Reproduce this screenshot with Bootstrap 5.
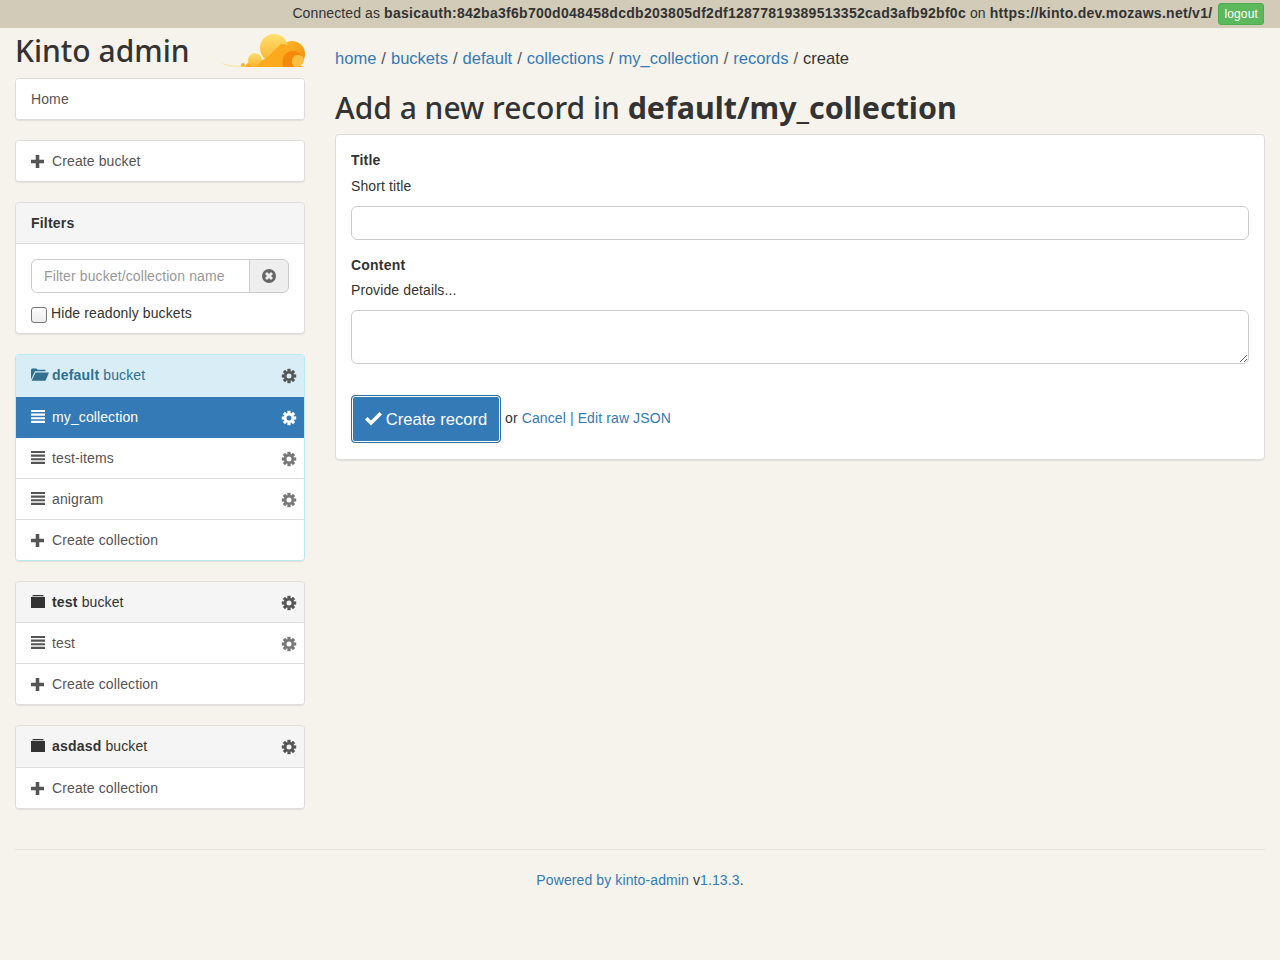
<!DOCTYPE html>
<html lang="en">

<head>
  <meta charset="UTF-8">
  <meta name="viewport" content="width=device-width, initial-scale=1.0">
  <title>Kinto admin</title>
  <link href="https://cdn.jsdelivr.net/npm/bootstrap@5.3.3/dist/css/bootstrap.min.css" rel="stylesheet">
  <style>
    body {
      --bs-border-radius: 4px;
      background: #f6f3ec;
      color: #333;
      font-family: "Liberation Sans", Arial, sans-serif;
      font-size: 14px;
      line-height: 20px;
      letter-spacing: .11px;
    }
    b {
      letter-spacing: .2px;
    }
    a {
      color: #337ab7;
      text-decoration: none;
    }
    .session-bar {
      height: 28px;
      background: #d2cbb7;
      padding: 3px 16px 0 0;
      gap: 6px;
    }
    .session-bar b {
      letter-spacing: .28px;
    }
    .session-bar .btn {
      --bs-btn-padding-y: 1px;
      --bs-btn-padding-x: 5px;
      --bs-btn-font-size: 12px;
      --bs-btn-line-height: 18px;
      --bs-btn-bg: #5cb85c;
      --bs-btn-border-color: #4cae4c;
      --bs-btn-border-radius: 3px;
      letter-spacing: .15px;
    }
    .page-cols {
      --bs-gutter-x: 30px;
    }
    .page-wrap {
      padding: 0 15px;
    }
    .brand-row {
      height: 50px;
      position: relative;
    }
    .brand-title {
      font-family: "Noto Sans", "Open Sans", sans-serif;
      font-weight: 500;
      font-size: 30px;
      line-height: 45px;
      letter-spacing: 0;
      margin: 0;
    }
    .brand-logo {
      position: absolute;
      right: 0;
      top: 6px;
    }
    .side-panel {
      --bs-card-border-color: #ddd;
      --bs-card-border-radius: 4px;
      --bs-card-inner-border-radius: 3px;
      --bs-card-cap-bg: #f5f5f5;
      --bs-card-cap-padding-y: 10px;
      --bs-card-cap-padding-x: 15px;
      margin-bottom: 20px;
      box-shadow: 0 1px 1px rgba(0, 0, 0, .08);
    }
    .side-panel .card-header {
      height: 41px;
      display: flex;
      align-items: center;
      border-bottom-color: #ddd;
    }
    .side-panel .card-header.tall-head {
      height: 42px;
      padding-bottom: 11px;
    }
    .side-panel .list-group {
      --bs-list-group-color: #555;
      --bs-list-group-item-padding-x: 15px;
      --bs-list-group-item-padding-y: 10px;
      --bs-list-group-border-color: #ddd;
      --bs-list-group-action-color: #555;
      --bs-list-group-active-bg: #337ab7;
      --bs-list-group-active-border-color: #337ab7;
    }
    .side-link {
      display: flex;
      align-items: center;
    }
    .lead-icon {
      margin-right: 7px;
      flex: none;
    }
    .lead-plus {
      margin-right: 8px;
    }
    .lead-open {
      margin-right: 3px;
    }
    .settings-icon {
      margin-left: auto;
      margin-right: -8px;
      margin-top: 2px;
      color: #777;
    }
    .card-header .settings-icon {
      color: #555;
    }
    .list-group-item.active .settings-icon {
      color: #fff;
    }
    .panel-info {
      --bs-card-border-color: #bce8f1;
    }
    .side-panel.panel-info .card-header {
      background: #d9edf7;
      color: #31708f;
      border-bottom: 0;
      height: 42px;
      padding-bottom: 12px;
    }
    .filter-body {
      padding: 15px 15px 9px;
      height: 89px;
    }
    .filter-group .form-control {
      height: 34px;
      font-size: 14px;
      padding: 6px 12px;
      border-color: #ccc;
      color: #555;
      letter-spacing: .11px;
    }
    .filter-group .form-control::placeholder {
      color: #999;
    }
    .filter-group .input-group-text {
      background: #eee;
      border-color: #ccc;
      padding: 0;
      width: 40px;
      justify-content: center;
      color: #666;
    }
    .readonly-row {
      display: flex;
      margin-top: 10px;
      gap: 4px;
    }
    .readonly-box {
      appearance: none;
      width: 16px;
      height: 16px;
      margin: 4px 0 0;
      border: 1px solid #767676;
      border-radius: 3px;
      background: linear-gradient(#fdfdfd, #ececec);
      flex: none;
    }
    .crumbs {
      --bs-breadcrumb-divider-color: #555;
      --bs-breadcrumb-item-active-color: #333;
      --bs-breadcrumb-item-padding-x: 5px;
      --bs-breadcrumb-margin-bottom: 0;
      font-size: 16.55px;
      line-height: 23px;
      letter-spacing: 0;
      padding-top: 19px;
    }
    .page-heading {
      font-family: "Noto Sans", "Open Sans", sans-serif;
      font-weight: 500;
      font-size: 30px;
      line-height: 36px;
      letter-spacing: 0;
      margin: 20px 0 8px;
      color: #333;
    }
    .page-heading b {
      font-weight: 700;
      font-size: 30.4px;
      letter-spacing: 0;
    }
    .form-panel {
      --bs-card-border-color: #ddd;
      --bs-card-border-radius: 4px;
      padding: 15px;
      height: 326px;
      box-shadow: 0 1px 1px rgba(0, 0, 0, .08);
    }
    .field-label {
      font-weight: 700;
      letter-spacing: .2px;
      display: block;
      margin: 0 0 6px;
    }
    .field-help {
      margin: 0 0 10px;
    }
    .form-panel .form-control {
      border-color: #ccc;
    }
    .title-input {
      height: 34px;
      margin-bottom: 15px;
    }
    .content-label {
      margin-bottom: 5px;
    }
    .content-input {
      height: 54px;
      margin-bottom: 31px;
    }
    .submit-btn {
      --bs-btn-bg: #337ab7;
      --bs-btn-border-color: #2e6da4;
      --bs-btn-hover-bg: #337ab7;
      --bs-btn-font-size: 16.6px;
      --bs-btn-border-radius: 4px;
      height: 48px;
      width: 150px;
      padding: 0;
      letter-spacing: 0;
      box-shadow: inset 0 0 0 1px #fff;
      display: inline-flex;
      align-items: center;
      justify-content: center;
      gap: 4px;
    }
    .submit-label {
      padding-top: 2px;
    }
    .form-links {
      margin-bottom: 2px;
    }
    .page-rule {
      border-color: #e6e3dc;
      opacity: 1;
      margin: 20px 0 20px;
    }
    .page-foot {
      text-align: center;
      padding-bottom: 70px;
    }
  </style>
</head>

<body>
  <svg width="0" height="0" class="d-block position-absolute">
    <symbol id="i-plus" viewBox="0 0 13 13">
      <path d="M4.700 0h3.600v4.700H13v3.600H8.300V13H4.700V8.300H0V4.700h4.700z" fill="currentColor" />
    </symbol>
    <symbol id="i-lines" viewBox="0 0 14 14">
      <path d="M0 0h14v2.100H0zM0 3.600h14v2.100H0zM0 7.200h14v2.100H0zM0 10.800h14V13H0z" fill="currentColor" />
    </symbol>
    <symbol id="i-gear" viewBox="0 0 16 16">
      <g fill="currentColor">
        <rect x="6.400" y=".8" width="3.200" height="3" />
        <rect x="6.400" y=".8" width="3.200" height="3" transform="rotate(45 8 8)" />
        <rect x="6.400" y=".8" width="3.200" height="3" transform="rotate(90 8 8)" />
        <rect x="6.400" y=".8" width="3.200" height="3" transform="rotate(135 8 8)" />
        <rect x="6.400" y=".8" width="3.200" height="3" transform="rotate(180 8 8)" />
        <rect x="6.400" y=".8" width="3.200" height="3" transform="rotate(225 8 8)" />
        <rect x="6.400" y=".8" width="3.200" height="3" transform="rotate(270 8 8)" />
        <rect x="6.400" y=".8" width="3.200" height="3" transform="rotate(315 8 8)" />
      </g>
      <circle cx="8" cy="8" r="3.800" fill="none" stroke="currentColor" stroke-width="2.600" />
    </symbol>
    <symbol id="i-folder" viewBox="0 0 14 14">
      <path d="M2 0h10l1 1.200H1zM0 2h14v11H0z" fill="currentColor" />
    </symbol>
    <symbol id="i-folder-open" viewBox="0 0 18 14">
      <path d="M0 11.500V1.500L1 .5h4.500l1 1.200H14.500v1.600H4L0 11.500zM4.600 4.400H18L14.500 12.800H.6z" fill="currentColor" />
    </symbol>
    <symbol id="i-clear" viewBox="0 0 14 14">
      <path fill-rule="evenodd" d="M7 0a7 7 0 1 1 0 14A7 7 0 0 1 7 0zM5 3 3 5l2 2-2 2 2 2 2-2 2 2 2-2-2-2 2-2-2-2-2 2z" fill="currentColor" />
    </symbol>
    <symbol id="i-check" viewBox="0 0 17 14">
      <path d="M0 7.500 2.500 5 6 8.500 14.500 0 17 2.500 6 13.500z" fill="currentColor" />
    </symbol>
  </svg>

  <div class="session-bar d-flex justify-content-end align-items-start">
    <span>Connected as <b>basicauth:842ba3f6b700d048458dcdb203805df2df12877819389513352cad3afb92bf0c</b> on <b>https://kinto.dev.mozaws.net/v1/</b></span>
    <button type="button" class="btn btn-success">logout</button>
  </div>

  <div class="page-wrap">
    <div class="row page-cols">
      <div class="col-3">
        <div class="brand-row">
          <h1 class="brand-title">Kinto admin</h1>
          <svg class="brand-logo" width="90" height="36" viewBox="0 0 90 36">
            <defs>
              <linearGradient id="cloudA" x1="0" y1="0" x2="0" y2="1">
                <stop offset="0" stop-color="#ffe070" />
                <stop offset="1" stop-color="#fbb12c" />
              </linearGradient>
              <linearGradient id="cloudB" x1="0" y1="0" x2="1" y2="1">
                <stop offset="0" stop-color="#fdbe30" />
                <stop offset="1" stop-color="#f38a0c" />
              </linearGradient>
            </defs>
            <path d="M5 29c8 2 15 3 22 3v1C19 33 11 32 5 29z" fill="#fde3a8" />
            <circle cx="28" cy="31" r="2" fill="#fbb12c" />
            <path d="M30 33c1-3 3-5 5-5h30l25 5z" fill="url(#cloudB)" />
            <circle cx="40" cy="26" r="7" fill="url(#cloudA)" />
            <circle cx="77" cy="20" r="13" fill="url(#cloudB)" />
            <circle cx="59" cy="14" r="14" fill="url(#cloudA)" />
            <path d="M47 26c6-1 11-9 19-16 4 0 8 1 10 4-4 3-6 8-7 19H42z" fill="#fbaa1e" />
            <path d="M68 33c-2-7 1-15 8-16 5-1 10 2 12 7-3-3-8-3-10 1-2 3-1 6 1 8z" fill="#f38a0c" />
            <path d="M77 27c0-4 3-6 6-6 3 0 6 2 6 5 0 4-4 7-7 7-3 0-5-3-5-6z" fill="#fcc040" />
          </svg>
        </div>

        <div class="card side-panel">
          <div class="list-group list-group-flush">
            <a href="#" class="list-group-item">Home</a>
          </div>
        </div>

        <div class="card side-panel">
          <div class="list-group list-group-flush">
            <a href="#" class="list-group-item side-link">
              <svg class="lead-icon lead-plus" width="13" height="13"><use href="#i-plus" /></svg>Create bucket
            </a>
          </div>
        </div>

        <div class="card side-panel">
          <div class="card-header"><b>Filters</b></div>
          <div class="filter-body">
            <div class="input-group filter-group">
              <input type="text" class="form-control" placeholder="Filter bucket/collection name">
              <span class="input-group-text"><svg width="14" height="14"><use href="#i-clear" /></svg></span>
            </div>
            <label class="readonly-row">
              <input type="checkbox" class="readonly-box">
              <span>Hide readonly buckets</span>
            </label>
          </div>
        </div>

        <div class="card side-panel panel-info">
          <div class="card-header">
            <svg class="lead-icon lead-open" width="18" height="14"><use href="#i-folder-open" /></svg>
            <span><b>default</b> bucket</span>
            <svg class="settings-icon" width="16" height="16"><use href="#i-gear" /></svg>
          </div>
          <div class="list-group list-group-flush">
            <a href="#" class="list-group-item side-link active">
              <svg class="lead-icon" width="14" height="14"><use href="#i-lines" /></svg>my_collection
              <svg class="settings-icon" width="16" height="16"><use href="#i-gear" /></svg>
            </a>
            <a href="#" class="list-group-item side-link">
              <svg class="lead-icon" width="14" height="14"><use href="#i-lines" /></svg>test-items
              <svg class="settings-icon" width="16" height="16"><use href="#i-gear" /></svg>
            </a>
            <a href="#" class="list-group-item side-link">
              <svg class="lead-icon" width="14" height="14"><use href="#i-lines" /></svg>anigram
              <svg class="settings-icon" width="16" height="16"><use href="#i-gear" /></svg>
            </a>
            <a href="#" class="list-group-item side-link">
              <svg class="lead-icon lead-plus" width="13" height="13"><use href="#i-plus" /></svg>Create collection
            </a>
          </div>
        </div>

        <div class="card side-panel">
          <div class="card-header">
            <svg class="lead-icon" width="14" height="14"><use href="#i-folder" /></svg>
            <span><b>test</b> bucket</span>
            <svg class="settings-icon" width="16" height="16"><use href="#i-gear" /></svg>
          </div>
          <div class="list-group list-group-flush">
            <a href="#" class="list-group-item side-link">
              <svg class="lead-icon" width="14" height="14"><use href="#i-lines" /></svg>test
              <svg class="settings-icon" width="16" height="16"><use href="#i-gear" /></svg>
            </a>
            <a href="#" class="list-group-item side-link">
              <svg class="lead-icon lead-plus" width="13" height="13"><use href="#i-plus" /></svg>Create collection
            </a>
          </div>
        </div>

        <div class="card side-panel">
          <div class="card-header tall-head">
            <svg class="lead-icon" width="14" height="14"><use href="#i-folder" /></svg>
            <span><b>asdasd</b> bucket</span>
            <svg class="settings-icon" width="16" height="16"><use href="#i-gear" /></svg>
          </div>
          <div class="list-group list-group-flush">
            <a href="#" class="list-group-item side-link">
              <svg class="lead-icon lead-plus" width="13" height="13"><use href="#i-plus" /></svg>Create collection
            </a>
          </div>
        </div>
      </div>

      <div class="col-9">
        <nav aria-label="breadcrumb">
          <ol class="breadcrumb crumbs">
            <li class="breadcrumb-item"><a href="#">home</a></li>
            <li class="breadcrumb-item"><a href="#">buckets</a></li>
            <li class="breadcrumb-item"><a href="#">default</a></li>
            <li class="breadcrumb-item"><a href="#">collections</a></li>
            <li class="breadcrumb-item"><a href="#">my_collection</a></li>
            <li class="breadcrumb-item"><a href="#">records</a></li>
            <li class="breadcrumb-item active" aria-current="page">create</li>
          </ol>
        </nav>
        <h1 class="page-heading">Add a new record in <b>default/my_collection</b></h1>
        <div class="card form-panel">
          <form>
            <label class="field-label">Title</label>
            <p class="field-help">Short title</p>
            <input type="text" class="form-control title-input">
            <label class="field-label content-label">Content</label>
            <p class="field-help">Provide details...</p>
            <textarea class="form-control content-input"></textarea>
            <div class="d-flex align-items-center gap-1">
              <button type="button" class="btn btn-primary submit-btn">
                <svg width="17" height="14"><use href="#i-check" /></svg><span class="submit-label">Create record</span>
              </button>
              <span class="form-links">or <a href="#">Cancel</a> <a href="#">| Edit raw JSON</a></span>
            </div>
          </form>
        </div>
      </div>
    </div>

    <hr class="page-rule">
    <div class="page-foot"><a href="#">Powered by kinto-admin</a> v<a href="#">1.13.3</a>.</div>
  </div>

  <script src="https://cdn.jsdelivr.net/npm/bootstrap@5.3.3/dist/js/bootstrap.bundle.min.js"></script>
</body>

</html>
